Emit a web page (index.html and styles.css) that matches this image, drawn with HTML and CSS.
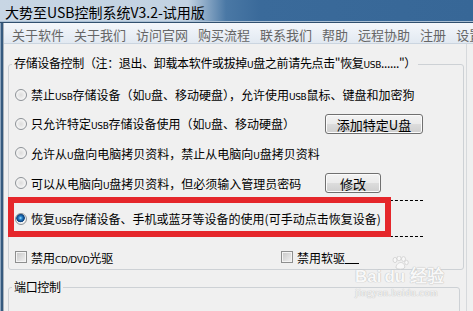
FILE: index.html
```html
<!DOCTYPE html>
<html lang="zh-CN">
<head>
    <meta charset="UTF-8">
    <title>大势至USB控制系统V3.2-试用版</title>
    <link rel="stylesheet" href="styles.css">
</head>
<body>
<div class="window">
    <div class="titlebar"><span class="title">大势至USB控制系统V3.2-试用版</span></div>

    <div class="frame">
        <div class="menubar">
            <a href="#">关于软件</a>
            <a href="#">关于我们</a>
            <a href="#">访问官网</a>
            <a href="#">购买流程</a>
            <a href="#">联系我们</a>
            <a href="#">帮助</a>
            <a href="#">远程协助</a>
            <a href="#">注册</a>
            <a href="#">设置</a>
        </div>

        <div class="content">
            <fieldset class="group">
                <legend>存储设备控制（注：退出、卸载本软件或拔掉<span class="en">U</span>盘之前请先点击"恢复<span class="en">USB</span>......"）</legend>

                <div class="row">
                    <label><input type="radio" name="mode"><span>禁止<span class="en">USB</span>存储设备（如<span class="en">U</span>盘、移动硬盘），允许使用<span class="en">USB</span>鼠标、键盘和加密狗</span></label>
                </div>
                <div class="row">
                    <label class="wide"><input type="radio" name="mode"><span>只允许特定<span class="en">USB</span>存储设备使用（如<span class="en">U</span>盘、移动硬盘）</span></label>
                    <button class="btn btn-add">添加特定U盘</button>
                </div>
                <div class="row tall">
                    <label><input type="radio" name="mode"><span>允许从<span class="en">U</span>盘向电脑拷贝资料，禁止从电脑向<span class="en">U</span>盘拷贝资料</span></label>
                </div>
                <div class="row tall">
                    <label class="wide"><input type="radio" name="mode"><span>可以从电脑向<span class="en">U</span>盘拷贝资料，但必须输入管理员密码</span></label>
                    <button class="btn btn-edit">修改</button>
                </div>
                <div class="row selected">
                    <label><input type="radio" name="mode" checked><span>恢复<span class="en">USB</span>存储设备、手机或蓝牙等设备的使用(可手动点击恢复设备)</span></label>
                    <span class="mark"></span>
                </div>
                <div class="row checks">
                    <label class="cd"><input type="checkbox"><span>禁用<span class="en">CD/DVD</span>光驱</span></label>
                    <label><input type="checkbox"><span>禁用软驱</span><span class="blank"></span></label>
                </div>
            </fieldset>

            <fieldset class="group port">
                <legend>端口控制</legend>
            </fieldset>

            <div class="watermark">
                <svg class="paw" width="18" height="14" viewBox="0 0 18 14">
                    <ellipse cx="4" cy="4" rx="2" ry="2.6"/>
                    <ellipse cx="8" cy="2.4" rx="2" ry="2.4"/>
                    <ellipse cx="12.5" cy="3" rx="2" ry="2.4"/>
                    <ellipse cx="15.5" cy="6.5" rx="1.8" ry="2.2"/>
                    <path d="M5 12 C5 8 8 6.5 10 6.5 C12 6.5 14.5 9 13.5 12 C12.5 13.5 6.5 13.5 5 12 Z"/>
                </svg>
                <div class="brand">Bai<span>du</span> 经验</div>
                <div class="site">jingyan.baidu.com</div>
            </div>
        </div>
    </div>
</div>
</body>
</html>
```

FILE: styles.css
```css
* {
    margin: 0;
    padding: 0;
    box-sizing: border-box;
}

body {
    width: 473px;
    height: 311px;
    overflow: hidden;
    background: #f0f0f0;
    font-family: "Noto Sans CJK SC", "Noto Sans", sans-serif;
    color: #000;
}

.titlebar {
    height: 22px;
    padding: 2px 0 0 5px;
    line-height: 20px;
    font-size: 14px;
    white-space: nowrap;
    background: linear-gradient(to right, #c8d6e4 0, #c2d2e2 188px, #4a78a5 226px, #3a6a9a 260px, #376797 100%);
    box-shadow: inset 0 -1px 0 #a9bfd4;
}

.frame {
    height: 289px;
    border-top: 1px solid #31506f;
    padding-left: 4px;
    background: linear-gradient(to right, #8ea6bf 0, #8ea6bf 1px, #365a7e 1px, #365a7e 3px, #a9b2bb 3px, #a9b2bb 4px, #f0f0f0 4px);
    display: flex;
    flex-direction: column;
}

.menubar {
    flex: none;
    height: 21px;
    display: flex;
    gap: 10px;
    padding: 4px 0 0 8px;
    line-height: 16px;
    font-size: 13px;
    white-space: nowrap;
    overflow: hidden;
    background: linear-gradient(#f4f7fb, #e2e9f1);
    border-bottom: 1px solid #cbd5e0;
}

.menubar a {
    color: #666;
    text-decoration: none;
}

.content {
    flex: 1;
    min-height: 0;
    overflow: hidden;
    position: relative;
    padding: 11px 9px 0 4px;
    background: linear-gradient(to left, #f0f0f0 6px, #d6d9dc 6px, #d6d9dc 7px, #f0f0f0 7px);
}

.group {
    border: 1px solid #cdd1d5;
    border-radius: 3px;
    padding: 7px 0 0 0;
    min-width: 0;
}

.group legend {
    font-size: 12px;
    line-height: 16px;
    padding: 0 2px;
    margin-left: 3px;
    white-space: nowrap;
    letter-spacing: -0.35px;
}

.row {
    display: flex;
    align-items: center;
    height: 29px;
    padding-left: 6px;
    font-size: 12px;
    white-space: nowrap;
}

.row.tall {
    height: 30px;
}

.row label {
    display: flex;
    align-items: center;
    gap: 4px;
}

.row label.wide {
    width: 310px;
}

.en {
    font-family: "DejaVu Sans", sans-serif;
    font-size: 9px;
    letter-spacing: -0.3px;
}

input[type=radio] {
    appearance: none;
    flex: none;
    width: 12px;
    height: 12px;
    border-radius: 50%;
    border: 1px solid #8d9297;
    background: radial-gradient(circle, #dcdcdc 0, #f6f6f6 70%, #e4e4e4 100%);
}

input[type=radio]:checked {
    background: radial-gradient(circle at 45% 40%, #a8e4ff 0, #2d8ad2 1.5px, #0e4684 3.5px, #184f88 4px, #f2f2f2 4.6px, #e6e6e6 100%);
}

input[type=checkbox] {
    appearance: none;
    flex: none;
    width: 12px;
    height: 12px;
    border: 1px solid #8e8f8f;
    background: linear-gradient(135deg, #c6c6c6, #f3f3f3);
    box-shadow: inset 0 0 0 1px #f4f4f4;
}

.btn {
    height: 20px;
    font-family: "Noto Sans CJK SC", sans-serif;
    font-size: 13px;
    color: #000;
    border: 1px solid #707070;
    border-radius: 3px;
    background: linear-gradient(#f3f3f3 0, #ebebeb 48%, #dcdcdc 52%, #cfcfcf 100%);
    box-shadow: inset 0 0 0 1px #fbfbfb;
}

.btn-add {
    width: 98px;
}

.btn-edit {
    width: 56px;
}

.selected {
    position: relative;
    height: 37px;
    margin-top: 2px;
    margin-right: 40px;
    border-top: 1px dashed #000;
    border-bottom: 1px dashed #000;
}

/* 红框标注 */
.mark {
    position: absolute;
    left: -1px;
    top: -4px;
    width: 383px;
    height: 40px;
    border: 6px solid #e5272b;
}

.checks {
    height: 24px;
    margin-top: 8px;
}

.checks .cd {
    width: 266px;
}

.blank {
    width: 14px;
    height: 14px;
    border-bottom: 1px solid #000;
    margin-left: -4px;
}

.port {
    height: 60px;
    margin-top: 9px;
    margin-right: 4px;
}

.watermark {
    position: absolute;
    left: 351px;
    top: 210px;
    width: 95px;
    color: #f8f8f8;
    text-shadow: 0 0 1px #b8b8b8, 0 0 1px #c4c4c4;
}

.paw {
    position: absolute;
    left: 36px;
    top: 2px;
    fill: #f8f8f8;
    stroke: #c4c4c4;
    stroke-width: 0.6;
}

.brand {
    margin-top: 14px;
    font-family: "Liberation Sans", sans-serif;
    font-weight: bold;
    font-size: 17px;
    line-height: 18px;
}

.brand span {
    margin-left: 3px;
}

.site {
    font-family: "Liberation Serif", serif;
    font-size: 10px;
    line-height: 14px;
    letter-spacing: 0.5px;
}
```
